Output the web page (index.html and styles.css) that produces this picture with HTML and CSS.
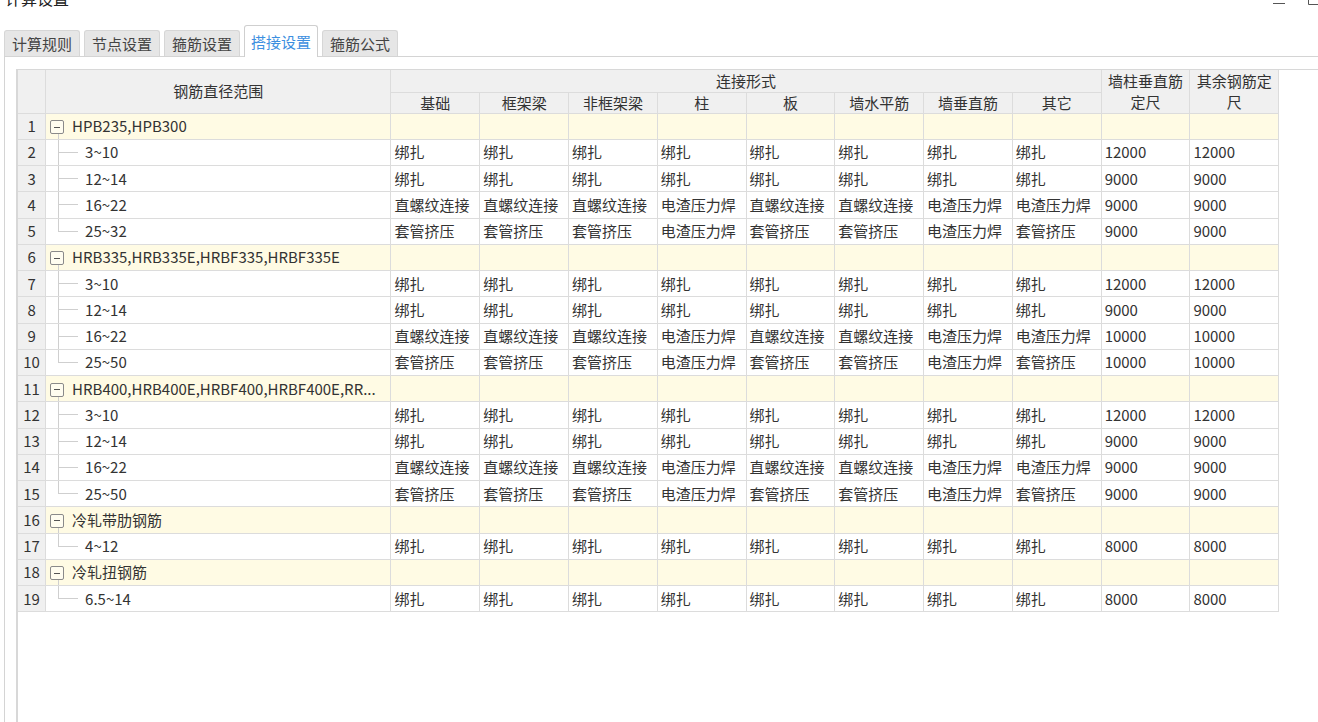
FILE: index.html
```html
<!DOCTYPE html>
<html lang="zh-CN">
<head>
<meta charset="utf-8">
<title>计算设置</title>
<link rel="stylesheet" href="styles.css">
</head>
<body>
<div class="window">
  <div class="titlebar">
    <span class="title">计算设置</span>
    <div class="controls">
      <svg class="ctl-min" width="14" height="6" viewBox="0 0 14 6"><line x1="1" y1="3.5" x2="13" y2="3.5" stroke="#555" stroke-width="1"/></svg>
      <svg class="ctl-max" width="12" height="6" viewBox="0 0 12 6"><polyline points="0.5,0 0.5,4.5 12,4.5" fill="none" stroke="#555" stroke-width="1"/></svg>
    </div>
  </div>
  <div class="tabs">
    <div class="tab">计算规则</div>
    <div class="tab">节点设置</div>
    <div class="tab">箍筋设置</div>
    <div class="tab active">搭接设置</div>
    <div class="tab">箍筋公式</div>
  </div>
  <div class="panel">
    <div class="grid">
      <table class="sheet">
        <colgroup>
          <col class="c-num"><col class="c-name">
          <col class="c-val"><col class="c-val"><col class="c-val"><col class="c-val"><col class="c-val">
          <col class="c-val"><col class="c-val"><col class="c-val"><col class="c-val"><col class="c-val">
        </colgroup>
        <thead>
          <tr class="h1">
            <th class="corner" rowspan="2"></th>
            <th rowspan="2">钢筋直径范围</th>
            <th colspan="8">连接形式</th>
            <th rowspan="2" class="wrap">墙柱垂直筋定尺</th>
            <th rowspan="2" class="wrap">其余钢筋定尺</th>
          </tr>
          <tr class="h2">
            <th>基础</th><th>框架梁</th><th>非框架梁</th><th>柱</th><th>板</th><th>墙水平筋</th><th>墙垂直筋</th><th>其它</th>
          </tr>
        </thead>
        <tbody>
          <tr class="group"><td class="num">1</td><td class="name gname"><span class="toggle"></span>HPB235,HPB300</td><td></td><td></td><td></td><td></td><td></td><td></td><td></td><td></td><td></td><td></td></tr>
          <tr><td class="num">2</td><td class="name child">3~10</td><td>绑扎</td><td>绑扎</td><td>绑扎</td><td>绑扎</td><td>绑扎</td><td>绑扎</td><td>绑扎</td><td>绑扎</td><td>12000</td><td>12000</td></tr>
          <tr><td class="num">3</td><td class="name child">12~14</td><td>绑扎</td><td>绑扎</td><td>绑扎</td><td>绑扎</td><td>绑扎</td><td>绑扎</td><td>绑扎</td><td>绑扎</td><td>9000</td><td>9000</td></tr>
          <tr><td class="num">4</td><td class="name child">16~22</td><td>直螺纹连接</td><td>直螺纹连接</td><td>直螺纹连接</td><td>电渣压力焊</td><td>直螺纹连接</td><td>直螺纹连接</td><td>电渣压力焊</td><td>电渣压力焊</td><td>9000</td><td>9000</td></tr>
          <tr><td class="num">5</td><td class="name child last">25~32</td><td>套管挤压</td><td>套管挤压</td><td>套管挤压</td><td>电渣压力焊</td><td>套管挤压</td><td>套管挤压</td><td>电渣压力焊</td><td>套管挤压</td><td>9000</td><td>9000</td></tr>

          <tr class="group"><td class="num">6</td><td class="name gname"><span class="toggle"></span>HRB335,HRB335E,HRBF335,HRBF335E</td><td></td><td></td><td></td><td></td><td></td><td></td><td></td><td></td><td></td><td></td></tr>
          <tr><td class="num">7</td><td class="name child">3~10</td><td>绑扎</td><td>绑扎</td><td>绑扎</td><td>绑扎</td><td>绑扎</td><td>绑扎</td><td>绑扎</td><td>绑扎</td><td>12000</td><td>12000</td></tr>
          <tr><td class="num">8</td><td class="name child">12~14</td><td>绑扎</td><td>绑扎</td><td>绑扎</td><td>绑扎</td><td>绑扎</td><td>绑扎</td><td>绑扎</td><td>绑扎</td><td>9000</td><td>9000</td></tr>
          <tr><td class="num">9</td><td class="name child">16~22</td><td>直螺纹连接</td><td>直螺纹连接</td><td>直螺纹连接</td><td>电渣压力焊</td><td>直螺纹连接</td><td>直螺纹连接</td><td>电渣压力焊</td><td>电渣压力焊</td><td>10000</td><td>10000</td></tr>
          <tr><td class="num">10</td><td class="name child last">25~50</td><td>套管挤压</td><td>套管挤压</td><td>套管挤压</td><td>电渣压力焊</td><td>套管挤压</td><td>套管挤压</td><td>电渣压力焊</td><td>套管挤压</td><td>10000</td><td>10000</td></tr>

          <tr class="group"><td class="num">11</td><td class="name gname"><span class="toggle"></span>HRB400,HRB400E,HRBF400,HRBF400E,RR...</td><td></td><td></td><td></td><td></td><td></td><td></td><td></td><td></td><td></td><td></td></tr>
          <tr><td class="num">12</td><td class="name child">3~10</td><td>绑扎</td><td>绑扎</td><td>绑扎</td><td>绑扎</td><td>绑扎</td><td>绑扎</td><td>绑扎</td><td>绑扎</td><td>12000</td><td>12000</td></tr>
          <tr><td class="num">13</td><td class="name child">12~14</td><td>绑扎</td><td>绑扎</td><td>绑扎</td><td>绑扎</td><td>绑扎</td><td>绑扎</td><td>绑扎</td><td>绑扎</td><td>9000</td><td>9000</td></tr>
          <tr><td class="num">14</td><td class="name child">16~22</td><td>直螺纹连接</td><td>直螺纹连接</td><td>直螺纹连接</td><td>电渣压力焊</td><td>直螺纹连接</td><td>直螺纹连接</td><td>电渣压力焊</td><td>电渣压力焊</td><td>9000</td><td>9000</td></tr>
          <tr><td class="num">15</td><td class="name child last">25~50</td><td>套管挤压</td><td>套管挤压</td><td>套管挤压</td><td>电渣压力焊</td><td>套管挤压</td><td>套管挤压</td><td>电渣压力焊</td><td>套管挤压</td><td>9000</td><td>9000</td></tr>

          <tr class="group"><td class="num">16</td><td class="name gname"><span class="toggle"></span>冷轧带肋钢筋</td><td></td><td></td><td></td><td></td><td></td><td></td><td></td><td></td><td></td><td></td></tr>
          <tr><td class="num">17</td><td class="name child last">4~12</td><td>绑扎</td><td>绑扎</td><td>绑扎</td><td>绑扎</td><td>绑扎</td><td>绑扎</td><td>绑扎</td><td>绑扎</td><td>8000</td><td>8000</td></tr>

          <tr class="group"><td class="num">18</td><td class="name gname"><span class="toggle"></span>冷轧扭钢筋</td><td></td><td></td><td></td><td></td><td></td><td></td><td></td><td></td><td></td><td></td></tr>
          <tr><td class="num">19</td><td class="name child last">6.5~14</td><td>绑扎</td><td>绑扎</td><td>绑扎</td><td>绑扎</td><td>绑扎</td><td>绑扎</td><td>绑扎</td><td>绑扎</td><td>8000</td><td>8000</td></tr>
        </tbody>
      </table>
    </div>
  </div>
</div>
</body>
</html>
```
FILE: styles.css
```css
* { box-sizing: border-box; }
html, body { margin: 0; padding: 0; background: #fff; }
body {
  width: 1318px;
  height: 722px;
  overflow: hidden;
  font-family: "Noto Sans CJK SC", "Microsoft YaHei", sans-serif;
  color: #333;
}
.window {
  display: flex;
  flex-direction: column;
  height: 722px;
}
.titlebar {
  display: flex;
  justify-content: space-between;
  align-items: flex-start;
  height: 25px;
  padding-left: 5px;
}
.title {
  font-size: 16px;
  line-height: 20px;
  margin-top: -12px;
  color: #222;
}
.controls {
  display: flex;
  gap: 22px;
  margin-right: -2px;
}

.tabs {
  display: flex;
  align-items: flex-end;
  gap: 4px;
  padding-left: 4px;
  height: 32px;
  position: relative;
  z-index: 1;
}
.tab {
  height: 26px;
  line-height: 25px;
  font-size: 15px;
  padding: 0 7px;
  background: #e6e6e6;
  border: 1px solid #d6d6d6;
  border-bottom: none;
  border-radius: 3px 3px 0 0;
  color: #444;
  white-space: nowrap;
  text-align: center;
  margin-bottom: 1px;
}
.tab.active {
  height: 32px;
  line-height: 32px;
  padding: 0 6px;
  background: #fff;
  border-color: #cfcfcf;
  color: #3d8fe0;
  margin-bottom: 0;
}
.panel {
  flex: 1;
  margin-top: -1px;
  margin-left: 4px;
  border-top: 1px solid #d4d4d4;
  border-left: 1px solid #d4d4d4;
  padding: 12px 0 0 11px;
  display: flex;
}
.grid {
  flex: 1;
  border-left: 2px solid #d8d8d8;
  border-top: 1px solid #d8d8d8;
  background: #fff;
  overflow: hidden;
}
.sheet {
  border-collapse: collapse;
  table-layout: fixed;
  width: 1260.7px;
  font-size: 15px;
}
.c-num { width: 27.6px; }
.c-name { width: 345.4px; }
.c-val { width: 88.77px; }

.sheet th, .sheet td {
  border-right: 1px solid #dcdcdc;
  border-bottom: 1px solid #dcdcdc;
  padding: 0;
  white-space: nowrap;
  overflow: hidden;
}
.sheet th {
  background: #f0f0f0;
  font-weight: normal;
  text-align: center;
  color: #333;
  line-height: 20px;
}
.sheet .h1 { height: 22px; }
.sheet .h2 { height: 21px; }
.sheet th.wrap {
  white-space: normal;
  line-height: 21px;
  padding: 0 2px;
  word-break: break-all;
}
.sheet tbody tr { height: 26.25px; }
.sheet td {
  padding-left: 3px;
  text-align: left;
  line-height: 20px;
}
.sheet td.num {
  background: #f0f0f0;
  text-align: center;
  padding: 0;
}
.group td { background: #fffbe4; }
.group td.num { background: #f0f0f0; }

.sheet td.name { padding-left: 4px; }
.sheet td.child {
  padding-left: 39px;
  background:
    linear-gradient(#cfcfcf, #cfcfcf) 12px 0 / 1px 100% no-repeat,
    linear-gradient(#cfcfcf, #cfcfcf) 12px 50% / 20px 1px no-repeat;
}
.sheet td.child.last {
  background:
    linear-gradient(#cfcfcf, #cfcfcf) 12px 0 / 1px 50% no-repeat,
    linear-gradient(#cfcfcf, #cfcfcf) 12px 50% / 20px 1px no-repeat;
}
.sheet td.gname {
  background:
    linear-gradient(#cfcfcf, #cfcfcf) 12px 100% / 1px 6px no-repeat,
    #fffbe4;
}
.toggle {
  display: inline-block;
  width: 14px;
  height: 14px;
  border: 1px solid #8a8a8a;
  border-radius: 2px;
  vertical-align: -2px;
  margin-right: 8px;
  background: linear-gradient(#555, #555) center / 6px 1px no-repeat, #fffdf0;
}
```
